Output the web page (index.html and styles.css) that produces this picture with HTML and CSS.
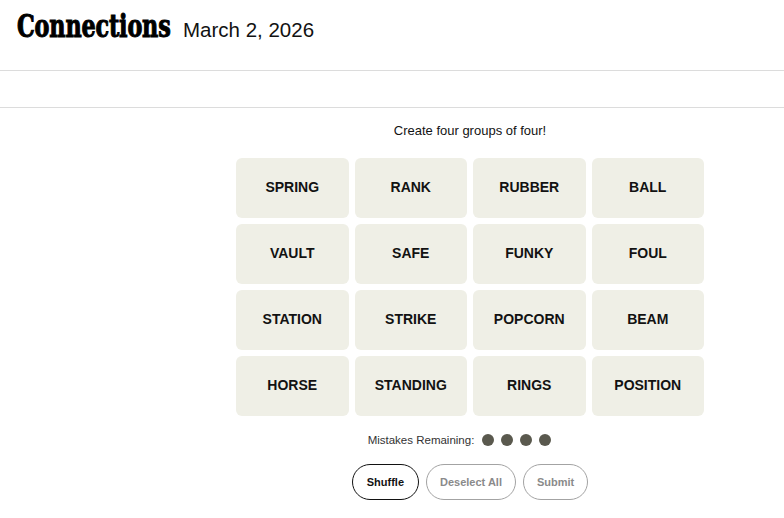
FILE: index.html
```html
<!DOCTYPE html>
<html lang="en">
<head>
<meta charset="utf-8">
<title>Connections</title>
<link rel="stylesheet" href="styles.css">
</head>
<body>
<header class="header">
  <h1 class="title"><span class="title-text">Connections</span></h1>
  <span class="date">March 2, 2026</span>
</header>
<div class="toolbar"></div>
<main class="game">
  <p class="intro">Create four groups of four!</p>
  <div class="board">
    <button class="tile">SPRING</button>
    <button class="tile">RANK</button>
    <button class="tile">RUBBER</button>
    <button class="tile">BALL</button>
    <button class="tile">VAULT</button>
    <button class="tile">SAFE</button>
    <button class="tile">FUNKY</button>
    <button class="tile">FOUL</button>
    <button class="tile">STATION</button>
    <button class="tile">STRIKE</button>
    <button class="tile">POPCORN</button>
    <button class="tile">BEAM</button>
    <button class="tile">HORSE</button>
    <button class="tile">STANDING</button>
    <button class="tile">RINGS</button>
    <button class="tile">POSITION</button>
  </div>
  <div class="mistakes">
    <span class="mistakes-label">Mistakes Remaining:</span>
    <span class="dots">
      <span class="dot"></span><span class="dot"></span><span class="dot"></span><span class="dot"></span>
    </span>
  </div>
  <div class="actions">
    <button class="pill pill-active">Shuffle</button>
    <button class="pill pill-disabled">Deselect All</button>
    <button class="pill pill-disabled">Submit</button>
  </div>
</main>
</body>
</html>
```

FILE: styles.css
```css
* { box-sizing: border-box; }
html, body { margin: 0; padding: 0; background: #ffffff; }
body {
  font-family: "Liberation Sans", Arial, sans-serif;
  color: #121212;
  width: 784px;
}
.header {
  height: 71px;
  border-bottom: 1px solid #dcdcdc;
  display: flex;
  align-items: baseline;
  padding: 6px 17px 0;
}
.title {
  margin: 0;
  width: 153px;
  margin-right: 13px;
  font-family: "DejaVu Serif", serif;
  font-stretch: condensed;
  font-weight: 700;
  font-size: 31px;
  line-height: 40px;
  letter-spacing: -0.2px;
  white-space: nowrap;
  color: #000000;
}
.title-text {
  display: inline-block;
  transform: scaleX(0.8);
  transform-origin: left center;
  -webkit-text-stroke: 1px #000000;
}
.date {
  font-size: 20.5px;
  font-weight: 400;
  color: #121212;
}
.toolbar {
  height: 37px;
  border-bottom: 1px solid #dcdcdc;
}
.game {
  margin-left: 156px;
  width: 628px;
  display: flex;
  flex-direction: column;
  align-items: center;
}
.intro {
  margin: 15px 0 0;
  font-size: 13px;
  line-height: 16px;
}
.board {
  margin-top: 19px;
  width: 468px;
  display: grid;
  grid-template-columns: repeat(4, 1fr);
  grid-auto-rows: 60px;
  gap: 6px;
}
.tile {
  border: none;
  border-radius: 6px;
  background: #efefe6;
  font-family: "Liberation Sans", Arial, sans-serif;
  font-weight: 700;
  font-size: 14px;
  color: #121212;
  padding: 0 0 3px;
}
.mistakes {
  margin-top: 16px;
  height: 16px;
  display: flex;
  align-items: center;
  gap: 8px;
  padding-right: 21px;
}
.mistakes-label {
  font-size: 11.5px;
  color: #333333;
}
.dots {
  display: flex;
  gap: 7px;
}
.dot {
  width: 12px;
  height: 12px;
  border-radius: 50%;
  background: #5a594e;
}
.actions {
  margin-top: 16px;
  display: flex;
  gap: 7px;
}
.pill {
  height: 36px;
  padding: 0 13px;
  border-radius: 20px;
  background: #ffffff;
  font-family: "Liberation Sans", Arial, sans-serif;
  font-size: 11px;
  font-weight: 700;
}
.pill-active {
  border: 1px solid #121212;
  color: #121212;
  padding: 0 14px;
}
.pill-disabled {
  border: 1px solid #a3a3a3;
  color: #8a8a8a;
}
```
